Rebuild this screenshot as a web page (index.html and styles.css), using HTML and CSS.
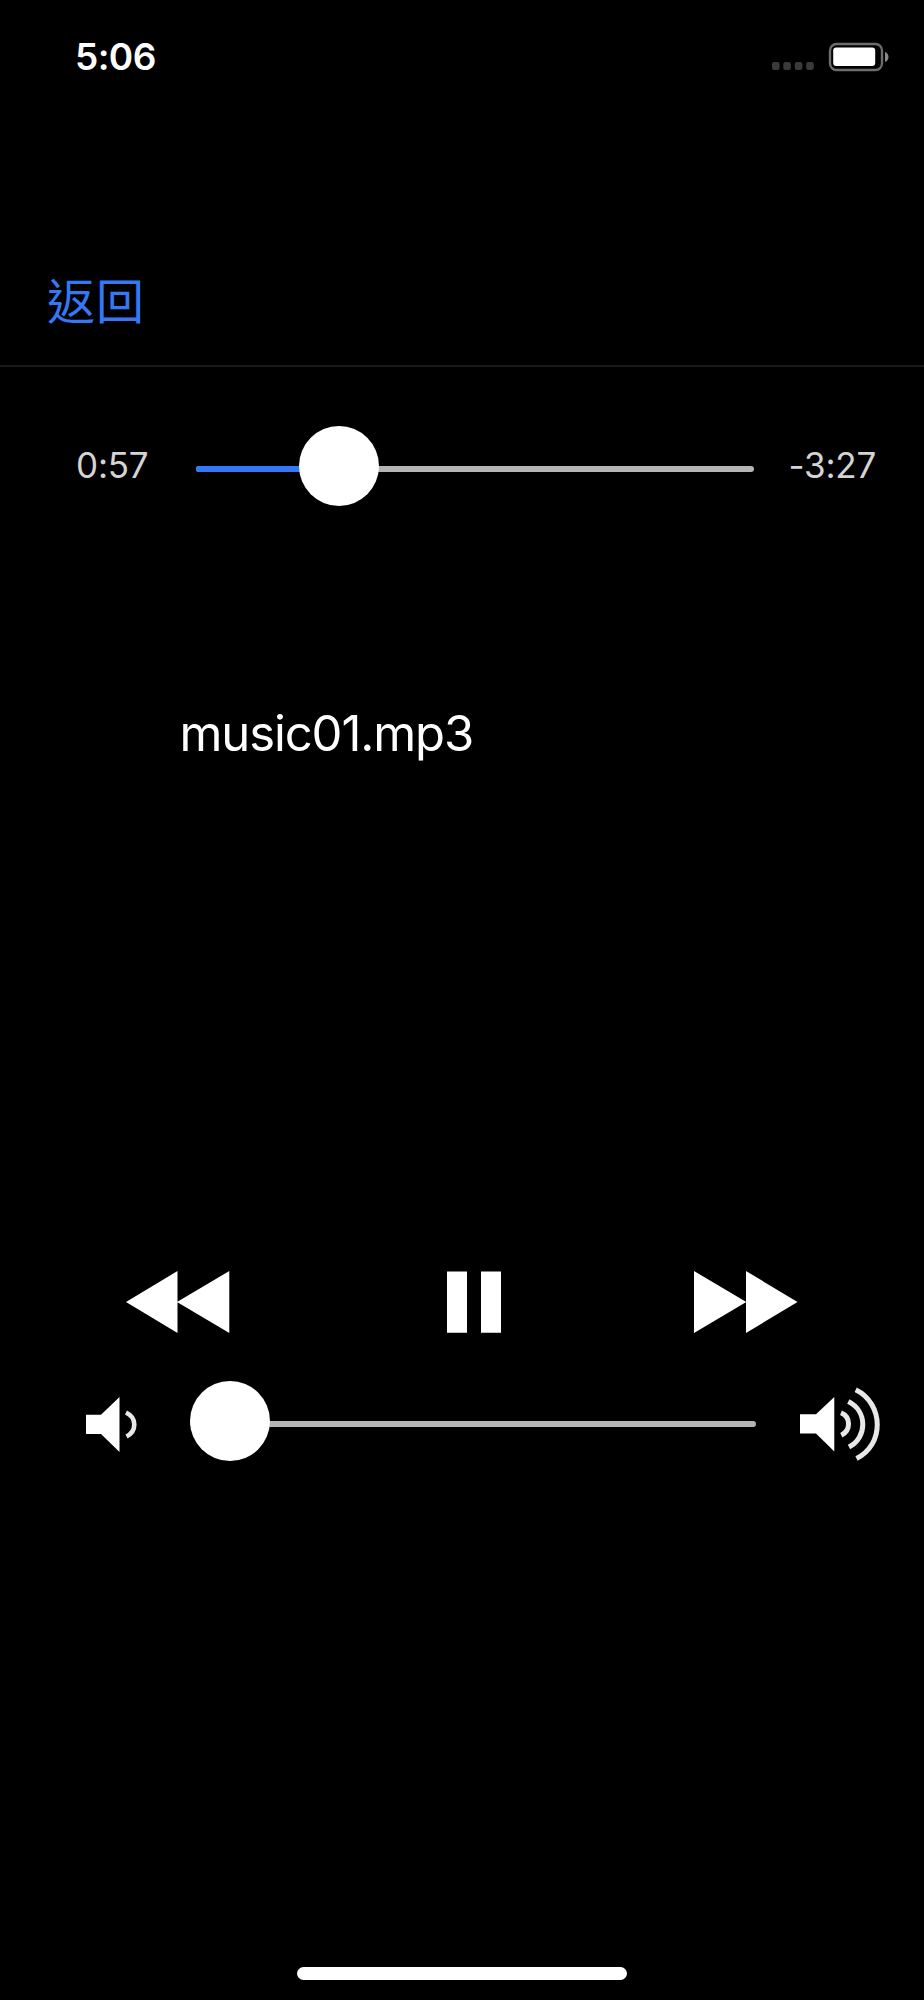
FILE: index.html
```html
<!DOCTYPE html>
<html lang="zh-Hant">
<head>
<meta charset="utf-8">
<title>music01.mp3</title>
<link rel="stylesheet" href="styles.css">
</head>
<body>
<div class="screen">
  <header class="status">
    <span class="clock">5:06</span>
    <svg class="status-icons" width="120" height="40" viewBox="770 37 120 40">
      <g fill="#3a3a3a"><rect x="772" y="62" width="7.6" height="8" rx="2.2"/><rect x="783.3" y="62" width="7.6" height="8" rx="2.2"/><rect x="794.8" y="62" width="7.6" height="8" rx="2.2"/><rect x="806.2" y="62" width="7.6" height="8" rx="2.2"/></g>
      <rect x="830" y="44" width="52" height="26" rx="6.5" fill="none" stroke="#6c6c6c" stroke-width="2.4"/>
      <rect x="833.2" y="47.5" width="42" height="18.5" rx="3" fill="#fff"/>
      <path d="M885 52C889.7 53.5 889.7 60.5 885 62Z" fill="#8a8a8a"/>
    </svg>
  </header>
  <nav class="nav"><a class="back">返回</a></nav>
  <section class="progress">
    <span class="time elapsed">0:57</span>
    <div class="slider seek"><div class="track"><div class="fill"></div></div><div class="thumb"></div></div>
    <span class="time remaining">-3:27</span>
  </section>
  <h1 class="title">music01.mp3</h1>
  <section class="controls">
    <svg class="rewind" width="104" height="64" viewBox="126 1270 104 64" fill="#fff"><path d="M126 1302 177.5 1271V1333ZM177 1302 229.3 1271V1333Z"/></svg>
    <svg class="pause" width="56" height="64" viewBox="446 1270 56 64" fill="#fff"><path d="M447 1271.5h20v61.3h-20zM481 1271.5h20v61.3h-20z"/></svg>
    <svg class="forward" width="104" height="64" viewBox="694 1270 104 64" fill="#fff"><path d="M694 1271 746.3 1302 694 1333ZM746 1271 797.5 1302 746 1333Z"/></svg>
  </section>
  <section class="volume">
    <svg class="quiet" width="56" height="80" viewBox="84 1384 56 80"><path fill="#fff" d="M86 1414.7H101L119.5 1397V1452L101 1434H86Z"/><path d="M126 1412.5Q134.3 1416.5 134.3 1424.5T126.5 1436.5" fill="none" stroke="#e8e8e8" stroke-width="4.6"/></svg>
    <div class="slider level"><div class="track"></div><div class="thumb"></div></div>
    <svg class="loud" width="84" height="80" viewBox="798 1384 84 80"><path fill="#fff" d="M800 1414.3H816L834.3 1397V1451.5L816 1433.5H800Z"/><g fill="none" stroke="#e8e8e8" stroke-width="5"><path d="M841 1412.8C851 1417 851 1430.5 841.3 1435.2"/><path d="M848.3 1401.5C867.5 1411 867.5 1437.5 849 1447"/><path d="M855.7 1389.8C884.3 1404 884.3 1445 856.5 1458.5"/></g></svg>
  </section>
  <footer class="home"><div class="home-bar"></div></footer>
</div>
</body>
</html>
```
FILE: styles.css
```css
* { box-sizing: border-box; }
body { margin: 0; background: #000; color: #fff; font-family: Inter, "Noto Sans CJK TC", sans-serif; }
svg { display: block; flex: none; }
.screen { width: 924px; height: 2000px; display: flex; flex-direction: column; background: #000; overflow: hidden; }
.status { height: 240px; padding: 37px 34px 0 75px; display: flex; justify-content: space-between; align-items: flex-start; }
.clock { font-size: 37px; line-height: 40px; font-weight: 600; letter-spacing: -0.6px; }
.nav { height: 127px; padding: 26px 0 0 47px; border-bottom: 2px solid #19191b; }
.back { display: block; font: 400 48px/64px "Noto Sans CJK TC", sans-serif; color: #3478f6; letter-spacing: 1px; }
.progress { height: 197px; padding: 58.5px 0 0 76px; display: flex; align-items: flex-start; }
.time { font-size: 35px; line-height: 78px; font-weight: 400; color: #d4d4d4; white-space: nowrap; letter-spacing: -0.2px; }
.elapsed { width: 120px; }
.remaining { margin-left: 34.5px; }
.slider { display: grid; align-items: center; height: 80px; flex: none; }
.slider > * { grid-area: 1 / 1; }
.track { height: 6px; border-radius: 3px; background: #b4b4b4; overflow: hidden; margin-top: 6px; }
.thumb { width: 80px; height: 80px; border-radius: 50%; background: #fff; }
.seek { width: 558px; }
.seek .thumb { margin-left: 103px; }
.fill { width: 143px; height: 100%; background: #3478f6; }
.title { margin: 0; height: 706px; padding: 137.5px 0 0 179.5px; font-size: 49px; line-height: 64px; font-weight: 400; letter-spacing: -1.1px; }
.controls { height: 111px; padding: 0 126px; display: flex; }
.pause { margin-left: 216px; }
.forward { margin-left: 192px; }
.volume { height: 119px; padding-left: 84px; display: flex; align-items: flex-start; }
.quiet { margin-top: 3px; }
.level { width: 566px; margin-left: 50px; }
.level .track { margin-top: 5px; }
.loud { margin: 3px 0 0 42px; }
.home { flex: 1; display: flex; justify-content: center; align-items: flex-end; padding-bottom: 20px; }
.home-bar { width: 330px; height: 13px; border-radius: 7px; background: #fff; }
```
